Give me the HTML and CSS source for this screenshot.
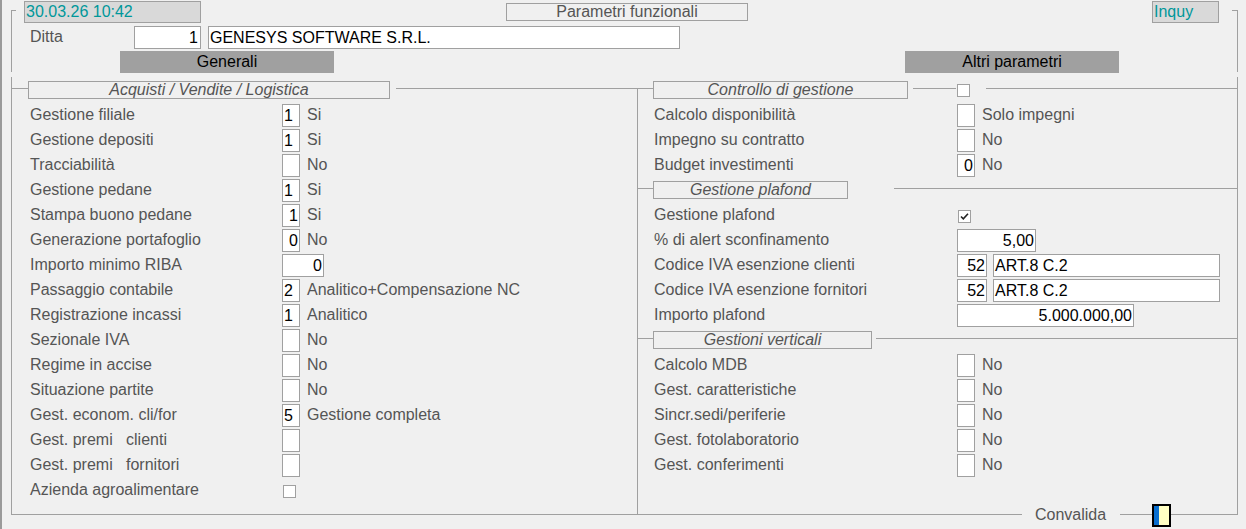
FILE: index.html
```html
<!DOCTYPE html>
<html lang="it">
<head>
<meta charset="utf-8">
<title>Parametri funzionali</title>
<link rel="stylesheet" href="styles.css">
</head>
<body>
<div class="app">
  <div class="top">
    <div class="hdr">
      <div class="stat date">30.03.26 10:42</div>
      <div class="ttl">Parametri funzionali</div>
      <div class="stat inq">Inquy</div>
    </div>
    <div class="ditta">
      <span class="dlbl">Ditta</span>
      <span class="fld r dnum">1</span>
      <span class="fld dname">GENESYS SOFTWARE S.R.L.</span>
    </div>
    <div class="tabs">
      <div class="tab tab-gen">Generali</div>
      <div class="tab tab-alt">Altri parametri</div>
    </div>
  </div>

  <div class="main">
    <div class="col col-left">
      <div class="legend">
        <span class="ln w16"></span>
        <span class="lg lg-acq">Acquisti / Vendite / Logistica</span>
        <span class="ln grow m6"></span>
      </div>
      <div class="row"><span class="lbl">Gestione filiale</span><span class="fld">1</span><span class="val">Si</span></div>
      <div class="row"><span class="lbl">Gestione depositi</span><span class="fld">1</span><span class="val">Si</span></div>
      <div class="row"><span class="lbl">Tracciabilità</span><span class="fld"></span><span class="val">No</span></div>
      <div class="row"><span class="lbl">Gestione pedane</span><span class="fld">1</span><span class="val">Si</span></div>
      <div class="row"><span class="lbl">Stampa buono pedane</span><span class="fld r">1</span><span class="val">Si</span></div>
      <div class="row"><span class="lbl">Generazione portafoglio</span><span class="fld r">0</span><span class="val">No</span></div>
      <div class="row"><span class="lbl">Importo minimo RIBA</span><span class="fld r w42">0</span></div>
      <div class="row"><span class="lbl">Passaggio contabile</span><span class="fld">2</span><span class="val">Analitico+Compensazione NC</span></div>
      <div class="row"><span class="lbl">Registrazione incassi</span><span class="fld">1</span><span class="val">Analitico</span></div>
      <div class="row"><span class="lbl">Sezionale IVA</span><span class="fld"></span><span class="val">No</span></div>
      <div class="row"><span class="lbl">Regime in accise</span><span class="fld"></span><span class="val">No</span></div>
      <div class="row"><span class="lbl">Situazione partite</span><span class="fld"></span><span class="val">No</span></div>
      <div class="row"><span class="lbl">Gest. econom. cli/for</span><span class="fld">5</span><span class="val">Gestione completa</span></div>
      <div class="row"><span class="lbl">Gest. premi&nbsp;&nbsp; clienti</span><span class="fld"></span></div>
      <div class="row"><span class="lbl">Gest. premi&nbsp;&nbsp; fornitori</span><span class="fld"></span></div>
      <div class="row"><span class="lbl">Azienda agroalimentare</span><span class="chk chk-row"></span></div>
    </div>

    <div class="col col-right">
      <div class="legend">
        <span class="ln w16"></span>
        <span class="lg lg-ctrl">Controllo di gestione</span>
        <span class="ln w43 m5"></span>
        <span class="chk chk-leg"></span>
        <span class="ln grow m16"></span>
      </div>
      <div class="row"><span class="lbl">Calcolo disponibilità</span><span class="fld"></span><span class="val">Solo impegni</span></div>
      <div class="row"><span class="lbl">Impegno su contratto</span><span class="fld"></span><span class="val">No</span></div>
      <div class="row"><span class="lbl">Budget investimenti</span><span class="fld r">0</span><span class="val">No</span></div>
      <div class="legend">
        <span class="ln w16"></span>
        <span class="lg lg-pla">Gestione plafond</span>
        <span class="ln grow m46"></span>
      </div>
      <div class="row"><span class="lbl">Gestione plafond</span><span class="chk chk-row checked"><svg width="11" height="11" viewBox="0 0 11 11"><path d="M2 5.5 L4.3 7.8 L9 2.8" fill="none" stroke="#222" stroke-width="1.6"/></svg></span></div>
      <div class="row"><span class="lbl">% di alert sconfinamento</span><span class="fld r w79">5,00</span></div>
      <div class="row"><span class="lbl">Codice IVA esenzione clienti</span><span class="fld r w30">52</span><span class="fld wdesc">ART.8 C.2</span></div>
      <div class="row"><span class="lbl">Codice IVA esenzione fornitori</span><span class="fld r w30">52</span><span class="fld wdesc">ART.8 C.2</span></div>
      <div class="row"><span class="lbl">Importo plafond</span><span class="fld r w177">5.000.000,00</span></div>
      <div class="legend">
        <span class="ln w16"></span>
        <span class="lg lg-ver">Gestioni verticali</span>
        <span class="ln grow m4"></span>
      </div>
      <div class="row"><span class="lbl">Calcolo MDB</span><span class="fld"></span><span class="val">No</span></div>
      <div class="row"><span class="lbl">Gest. caratteristiche</span><span class="fld"></span><span class="val">No</span></div>
      <div class="row"><span class="lbl">Sincr.sedi/periferie</span><span class="fld"></span><span class="val">No</span></div>
      <div class="row"><span class="lbl">Gest. fotolaboratorio</span><span class="fld"></span><span class="val">No</span></div>
      <div class="row"><span class="lbl">Gest. conferimenti</span><span class="fld"></span><span class="val">No</span></div>
    </div>

    <div class="footer">
      <span class="conv">Convalida</span>
      <span class="okbox"><span class="caret"></span></span>
    </div>
  </div>
</div>
</body>
</html>
```

FILE: styles.css
```css
html, body {
  margin: 0;
  padding: 0;
  background: #f0f0f0;
}

body {
  font-family: "Liberation Sans", Arial, sans-serif;
  font-size: 16px;
  color: #555555;
}

.app {
  width: 1246px;
  height: 529px;
  box-shadow: inset 2px 0 0 #9a9a9a;
  overflow: hidden;
}

/* ---------- generic field ---------- */
.fld {
  flex: none;
  box-sizing: border-box;
  display: inline-block;
  width: 18px;
  height: 23px;
  border: 1px solid #a0a0a0;
  background: #ffffff;
  color: #000000;
  line-height: 21px;
  padding: 0 1px;
  overflow: hidden;
  white-space: nowrap;
}

.fld.r {
  text-align: right;
}

/* ---------- top area ---------- */
.top {
  position: relative;
  box-sizing: border-box;
  height: 73px;
  padding-top: 1px;
}

.top::before,
.top::after {
  content: "";
  position: absolute;
  top: 10px;
  height: 61px;
  border-top: 1px solid #a0a0a0;
}

.top::before {
  left: 11px;
  width: 4px;
  border-left: 1px solid #a0a0a0;
}

.top::after {
  right: 8px;
  width: 5px;
  border-right: 1px solid #a0a0a0;
}

.hdr {
  display: flex;
  align-items: flex-start;
  height: 22px;
  padding-left: 24px;
}

.stat {
  box-sizing: border-box;
  height: 22px;
  border: 1px solid #a0a0a0;
  background: #d9d9d9;
  color: #00979a;
  line-height: 20px;
  padding-left: 1px;
  white-space: nowrap;
}

.date {
  width: 177px;
}

.inq {
  width: 67px;
  margin-left: 404px;
}

.ttl {
  box-sizing: border-box;
  width: 242px;
  height: 18px;
  margin-top: 2px;
  margin-left: 305px;
  border: 1px solid #a0a0a0;
  text-align: center;
  line-height: 16px;
  color: #555555;
}

.ditta {
  display: flex;
  align-items: center;
  height: 22px;
  margin-top: 3px;
  padding-left: 30px;
}

.ditta .dlbl {
  width: 104px;
  margin-bottom: 1px;
}

.ditta .dnum {
  width: 67px;
  height: 23px;
  padding-right: 2px;
}

.ditta .dname {
  width: 472px;
  height: 23px;
  margin-left: 7px;
}

.tabs {
  display: flex;
  height: 22px;
  margin-top: 3px;
}

.tab {
  width: 214px;
  height: 22px;
  background: #a0a0a0;
  color: #000;
  text-align: center;
  line-height: 22px;
}

.tab-gen {
  margin-left: 120px;
}

.tab-alt {
  margin-left: 571px;
}

/* ---------- main frame ---------- */
.main {
  position: relative;
  box-sizing: border-box;
  width: 1227px;
  height: 438px;
  margin-top: 4px;
  margin-left: 11px;
  padding-top: 1px;
  border-left: 1px solid #a0a0a0;
  border-right: 1px solid #a0a0a0;
  border-bottom: 1px solid #a0a0a0;
  display: grid;
  grid-template-columns: 625px 600px;
}

.col {
  position: relative;
}

.col-right::before {
  content: "";
  position: absolute;
  left: 0;
  top: 10px;
  bottom: 0;
  border-left: 1px solid #a0a0a0;
}

.legend {
  display: flex;
  align-items: flex-start;
  height: 25px;
}

.ln {
  height: 0;
  margin-top: 10px;
  border-top: 1px solid #a0a0a0;
}

.w16 { width: 16px; }
.w43 { width: 43px; }
.grow { flex: 1; }
.m4 { margin-left: 4px; }
.m5 { margin-left: 5px; }
.m6 { margin-left: 6px; }
.m16 { margin-left: 16px; }
.m46 { margin-left: 46px; }

.lg {
  box-sizing: border-box;
  height: 18px;
  margin-top: 3px;
  border: 1px solid #a0a0a0;
  font-style: italic;
  text-align: center;
  line-height: 16px;
  color: #555555;
  white-space: nowrap;
}

.lg-acq { width: 362px; }
.lg-ctrl { width: 255px; }
.lg-pla { width: 195px; }
.lg-ver { width: 219px; }

.row {
  display: flex;
  align-items: center;
  height: 25px;
  white-space: nowrap;
}

.col-left .row {
  padding-left: 18px;
}

.col-left .lbl {
  width: 252px;
}

.col-right .row {
  padding-left: 17px;
}

.col-right .lbl {
  width: 303px;
}

.lbl {
  flex: none;
  margin-bottom: 2px;
}

.row .w30 { width: 30px; }
.row .w42 { width: 42px; }
.row .w79 { width: 79px; }
.row .w177 { width: 177px; }

.row .wdesc {
  width: 227px;
  margin-left: 6px;
}

.val {
  margin-left: 7px;
  margin-bottom: 2px;
}

.chk {
  flex: none;
  box-sizing: border-box;
  display: flex;
  align-items: center;
  justify-content: center;
  width: 13px;
  height: 13px;
  border: 1px solid #a0a0a0;
  background: #ffffff;
}

.chk-leg {
  margin-left: 1px;
  margin-top: 6px;
}

.chk-row {
  margin-left: 1px;
  align-self: flex-start;
  margin-top: 7px;
}

/* ---------- footer ---------- */
.footer {
  position: absolute;
  left: 1010px;
  top: 426px;
  height: 24px;
  display: flex;
  align-items: center;
}

.conv {
  padding: 0 14px 0 13px;
  background: #f0f0f0;
  line-height: 18px;
  color: #555555;
}

.okbox {
  box-sizing: border-box;
  display: flex;
  width: 19px;
  height: 23px;
  margin-left: 32px;
  border: 2px solid #000000;
  background: #ffffc4;
}

.caret {
  width: 5px;
  height: 100%;
  background: #0a6fd0;
}
```
